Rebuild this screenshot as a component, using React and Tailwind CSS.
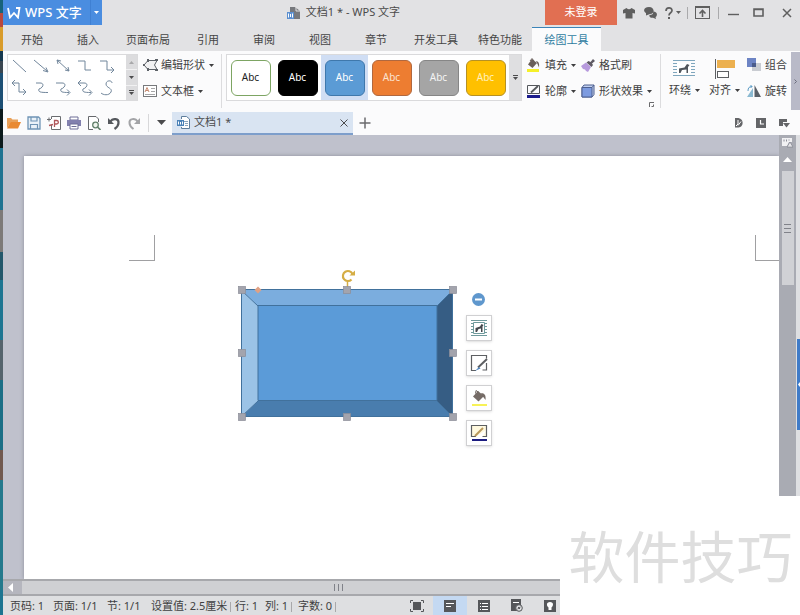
import React from "react";

const desktopBands = [
  ["h-[13px]", "bg-[#176379]"],
  ["h-[14px]", "bg-[#b8483f]"],
  ["h-[24px]", "bg-[#d99c2b]"],
  ["h-[10px]", "bg-[#14384f]"],
  ["h-[12px]", "bg-[#3a4650]"],
  ["h-[36px]", "bg-[#1c4f74]"],
  ["h-[39px]", "bg-[#0c1a1c]"],
  ["h-[62px]", "bg-[#1f7391]"],
  ["h-[42px]", "bg-[#7d7a78]"],
  ["h-[28px]", "bg-[#23586b]"],
  ["h-[60px]", "bg-[#1d7591]"],
  ["h-[40px]", "bg-[#55646c]"],
  ["h-[70px]", "bg-[#1b6f86]"],
  ["h-[30px]", "bg-[#71594f]"],
  ["h-[110px]", "bg-[#24798c]"],
];

function Caret({ className = "" }) {
  return (
    <svg width="5" height="3" viewBox="0 0 5 3" className={"shrink-0 " + className}>
      <path d="M0 0h5L2.500 3z" fill="currentColor" />
    </svg>
  );
}

function Divider({ className = "" }) {
  return <div className={"w-px shrink-0 " + className} />;
}

/* ---------- title bar ---------- */

function TitleBar() {
  return (
    <header className="flex h-[25px] shrink-0 items-center bg-[#e2e2e4]">
      <button className="flex h-full w-[99px] shrink-0 items-center bg-[#4a8de0] text-white">
        <svg width="14" height="12" viewBox="0 0 14 12" className="ml-1 mr-1">
          <path d="M1 1l2 9.500L7 6l4 4.500L12.500 1H9" fill="none" stroke="#fff" strokeWidth="1.800" />
        </svg>
        <span className="whitespace-nowrap text-[13px] font-medium">WPS 文字</span>
        <span className="ml-auto flex h-full w-[12px] items-center justify-center border-l border-[#3f80d3]">
          <Caret />
        </span>
      </button>
      <div className="flex flex-1 items-center justify-center gap-[5px] pl-10 text-[#4a4a4a]">
        <svg width="14" height="14" viewBox="0 0 14 14">
          <path d="M3 1h5v3h1v9H7V6H3z" fill="#77797d" />
          <path d="M8 1l5 4v8H8z" fill="#77797d" />
          <path d="M9 1v4h4" fill="none" stroke="#e2e2e4" />
          <rect x="0" y="6" width="7" height="7" fill="#5b8fd0" />
          <path d="M1.500 7.500v4M5.500 7.500v4M3.500 8v3" stroke="#fff" strokeWidth="1" />
        </svg>
        <h1 className="whitespace-nowrap text-[11px]">文档1 * - WPS 文字</h1>
      </div>
      <button className="h-full w-[72px] shrink-0 bg-[#e16f52] text-[11px] text-white">未登录</button>
      <div className="flex h-full w-[183px] shrink-0 items-center text-[#5f5f5f]">
        <button aria-label="皮肤" className="ml-[6px]">
          <svg width="12" height="12" viewBox="0 0 12 12">
            <path d="M3.500 1Q6 3.500 8.500 1L12 3v3.500L9.500 6v5.500h-7V6L0 6.500V3z" fill="currentColor" />
          </svg>
        </button>
        <button aria-label="反馈" className="ml-[9px]">
          <svg width="13" height="12" viewBox="0 0 13 12">
            <path d="M5 0c6 0 6 7 1 7L2 8.500 2 6C-1.500 4 0 0 5 0z" fill="currentColor" />
            <path d="M9 4.500c5 0 4.500 4.500 2.500 5.500l.5 2-3-1.200C6 11 5 9.500 5.500 8 9 8 9.500 6 9 4.500z" fill="currentColor" />
          </svg>
        </button>
        <button aria-label="帮助" className="ml-2 flex items-center gap-[3px]">
          <svg width="8" height="12" viewBox="0 0 8 12">
            <path d="M1 4C1 0 7 0 7 3.500 7 6 4 5.500 4 8.500" fill="none" stroke="currentColor" strokeWidth="1.700" />
            <rect x="3" y="10" width="2" height="2" fill="currentColor" />
          </svg>
          <Caret />
        </button>
        <Divider className="ml-[6px] h-3 bg-[#aaaaac]" />
        <button aria-label="功能区" className="ml-[7px]">
          <svg width="15" height="13" viewBox="0 0 15 13">
            <rect x=".5" y=".5" width="14" height="12" fill="none" stroke="currentColor" />
            <path d="M0 1.500h15" stroke="currentColor" />
            <path d="M7.500 11V5M4.500 7.500l3-3 3 3" fill="none" stroke="currentColor" strokeWidth="1.600" />
          </svg>
        </button>
        <Divider className="ml-2 h-3 bg-[#aaaaac]" />
        <button aria-label="最小化" className="ml-[9px]">
          <svg width="11" height="12" viewBox="0 0 11 12">
            <path d="M0 7.500h11" stroke="currentColor" strokeWidth="1.400" />
          </svg>
        </button>
        <button aria-label="最大化" className="ml-[14px]">
          <svg width="11" height="9" viewBox="0 0 11 9">
            <path d="M1 1h9v7H1zM1 1.500h9" fill="none" stroke="currentColor" strokeWidth="1.600" />
          </svg>
        </button>
        <button aria-label="关闭" className="ml-[18px]">
          <svg width="10" height="10" viewBox="0 0 10 10">
            <path d="M1 1l8 8M9 1L1 9" stroke="currentColor" strokeWidth="1.500" />
          </svg>
        </button>
      </div>
    </header>
  );
}

/* ---------- ribbon tabs ---------- */

function RibbonTabs() {
  const tabs = ["开始", "插入", "页面布局", "引用", "审阅", "视图", "章节", "开发工具", "特色功能"];
  return (
    <nav className="flex h-[26px] shrink-0 bg-[#e2e2e4] pl-px pt-[2px] text-[11px] text-[#454545]">
      {tabs.map((t) => (
        <button key={t} className={"h-full shrink-0 pt-[2px] " + (t.length > 2 ? "w-16" : "w-14")}>
          {t}
        </button>
      ))}
      <button className="h-full w-[69px] shrink-0 border-t border-[#3b84b8] bg-[#fbfbfc] pt-px text-[#2f7ba0]">绘图工具</button>
    </nav>
  );
}

/* ---------- ribbon ---------- */

const connectorPaths = [
  "M2 2L15 14",
  "M1 2L14 13M15 14l-5-1.500M15 14l-2-4.500",
  "M2 2L14 13M2 2l4 1M2 2l1 4M14 13l-4-1M14 13l-1-4",
  "M1 3h7v9h6",
  "M1 3h7v9h7M12 9l3 3-3 3",
  "M1 3h7v9h7M4 0L1 3l3 3M12 9l3 3-3 3",
  "M3 3h4c5 0 3 5-1 6-1 3 1 3.500 9 3.500",
  "M1 3h6c5 0 3 5-1 6-1 3 1 3.500 8 3.500M12 9.500l3 3-3 3",
  "M1 3h6c5 0 3 5-1 6-1 3 1 3.500 8 3.500M4 0L1 3l3 3M12 9.500l3 3-3 3",
  "M13 3C13 0 7 0 7 4s7 4 5 8-8 3-10 1",
];

function LineGallery() {
  return (
    <div className="ml-1 flex h-[47px] w-[131px] shrink-0 border border-[#dadadc] bg-white">
      <div className="grid flex-1 grid-cols-5 pb-px pr-2">
        {connectorPaths.map((d, i) => (
          <button key={i} aria-label={"连接符 " + (i + 1)} className="flex items-center justify-center">
            <svg width="16" height="16" viewBox="0 0 16 16">
              <path d={d} fill="none" stroke="#71869b" strokeWidth="1" />
            </svg>
          </button>
        ))}
      </div>
      <div className="flex w-[11px] flex-col divide-y divide-[#f1f1f2] bg-[#dcdcde] text-[#4c4c4e]">
        <button aria-label="上移" className="flex flex-1 items-center justify-center text-[#a8a8aa]">
          <Caret className="rotate-180" />
        </button>
        <button aria-label="下移" className="flex flex-1 items-center justify-center">
          <Caret />
        </button>
        <button aria-label="更多线条" className="flex flex-1 flex-col items-center justify-center gap-px">
          <span className="h-px w-[5px] bg-current" />
          <Caret />
        </button>
      </div>
    </div>
  );
}

function RibbonButton({ icon, label, caret }) {
  return (
    <button className="flex h-[26px] items-center whitespace-nowrap">
      <span className="flex w-[18px] shrink-0 items-center">{icon}</span>
      <span>{label}</span>
      {caret && <Caret className="ml-1" />}
    </button>
  );
}

const styles = [
  "border-[#7da563] bg-white text-[#222]",
  "border-black bg-black text-white",
  "border-[#3f78ac] bg-[#5b9bd5] text-white",
  "border-[#b0683f] bg-[#ed7d31] text-[#fbe3d2]",
  "border-[#868686] bg-[#a5a5a5] text-[#f4f4f4]",
  "border-[#b69124] bg-[#ffc000] text-[#fff0bf]",
];

function StyleGallery() {
  return (
    <div className="ml-1 flex h-[47px] w-[296px] shrink-0 border border-[#dadadc] bg-white">
      {styles.map((s, i) => (
        <div key={s} className={"flex w-[47px] shrink-0 items-center justify-center " + (i === 2 ? "bg-[#d0def4]" : "")}>
          <button className={"h-9 w-10 rounded-md border text-[10px] " + s}>Abc</button>
        </div>
      ))}
      <button aria-label="更多样式" className="flex flex-1 flex-col items-center justify-center gap-px bg-[#dfdfe1] text-[#4c4c4e]">
        <span className="h-px w-[5px] bg-current" />
        <Caret />
      </button>
    </div>
  );
}

function BucketIcon() {
  return (
    <svg width="14" height="14" viewBox="0 0 14 14">
      <rect x="0" y="11" width="12" height="3" fill="#f5f02a" />
      <path d="M5 1l5 4-4.500 5L1 6.500z" fill="#6a5f5a" />
      <path d="M3 3l2-2.500L7 3" fill="none" stroke="#6a5f5a" />
      <path d="M9 3c3 .5 3.500 3 3 6.500L10.500 6z" fill="#6a5f5a" />
    </svg>
  );
}

function Ribbon() {
  return (
    <section className="flex h-[59px] shrink-0 bg-[#fbfbfc] text-[11px] text-[#3f3f41]">
      <div className="flex h-full shrink-0 pt-[3px]">
        <LineGallery />
        <div className="-mt-[2px] ml-[5px] w-[78px]">
          <RibbonButton
            label="编辑形状"
            caret
            icon={
              <svg width="15" height="12" viewBox="0 0 15 12">
                <path d="M5 1.500h9L11.500 6l2.500 4.500H5L1 6z" fill="#f1f1f2" stroke="#5d6268" />
                <path d="M4 0h2v3H4zM12 0h3v2h-3zM12 10h3v2h-3zM4 9h2v3H4zM0 5h2v2H0z" fill="#5d6268" />
              </svg>
            }
          />
          <RibbonButton
            label="文本框"
            caret
            icon={
              <svg width="14" height="12" viewBox="0 0 14 12">
                <rect x=".5" y=".5" width="13" height="11" fill="#fff" stroke="#77797c" />
                <path d="M2 7l2-4.500L6 7M3 5.500h2" fill="none" stroke="#c68a70" />
                <path d="M8 3.500h4M8 6.500h4M2 9.500h10" stroke="#a5a5a7" />
              </svg>
            }
          />
        </div>
        <Divider className="h-[54px] bg-[#dcdcde]" />
        <StyleGallery />
        <div className="-mt-[2px] ml-[5px] w-[54px]">
          <RibbonButton label="填充" caret icon={<BucketIcon />} />
          <RibbonButton
            label="轮廓"
            caret
            icon={
              <svg width="14" height="14" viewBox="0 0 14 14">
                <path d="M12.500 4v5.500H.5v-8h12V4" fill="none" stroke="#55585c" />
                <path d="M4 8.500l7-6.500" stroke="#55585c" strokeWidth="1.800" />
                <rect x="0" y="11" width="13" height="3" fill="#1c1c8c" />
              </svg>
            }
          />
        </div>
        <div className="-mt-[2px] w-[72px]">
          <RibbonButton
            label="格式刷"
            icon={
              <svg width="14" height="13" viewBox="0 0 14 13">
                <path d="M0 7l5-3.500L10 8l-3 5-2-1-1-1.500L2 10z" fill="#b79add" />
                <path d="M5.500 3.500l5 4.500 1.500-2-1-1.500L14 2l-2-2-2.500 3L7.500 2z" fill="#5f5a64" />
              </svg>
            }
          />
          <RibbonButton
            label="形状效果"
            caret
            icon={
              <svg width="14" height="14" viewBox="0 0 14 14">
                <path d="M1 3.500l2-2.500h10v9.500L11 13H1z" fill="#c3d1f0" stroke="#4d5f8f" />
                <path d="M1 3.500h10V13H1z" fill="#7d9be0" stroke="#4d5f8f" />
                <path d="M11 3.500L13 1" stroke="#4d5f8f" />
              </svg>
            }
          />
        </div>
        <button aria-label="形状设置" className="-ml-1 mb-[3px] self-end text-[#6a6a6c]">
          <svg width="5" height="5" viewBox="0 0 5 5">
            <path d="M.5 5V.5H5M2.500 4.500h2v-2" fill="none" stroke="currentColor" />
          </svg>
        </button>
        <Divider className="ml-[6px] h-[54px] bg-[#dcdcde]" />
        <button className="ml-2 flex w-[31px] flex-col items-start">
          <svg width="22" height="18" viewBox="0 0 22 18" className="mb-1 ml-1 mt-[6px]">
            <path d="M0 .5h22M0 3.500h22M0 6.500h22M0 9.500h22M0 12.500h22M0 15.500h22" stroke="#7fa6bd" />
            <path d="M4 2.500h14v12H4z" fill="#fff" />
            <path d="M6 13V8.500l5.500-1L14 4l2.500 1L15 7v6h-1.500v-3.500L9 10l-1.500 3z" fill="#50555b" />
          </svg>
          <span className="flex items-center gap-1 whitespace-nowrap leading-4">环绕<Caret /></span>
        </button>
        <button className="ml-[9px] flex w-[31px] flex-col items-start">
          <svg width="20" height="20" viewBox="0 0 20 20" className="mb-[3px] ml-[6px] mt-[5px]">
            <path d="M.5 0v20" stroke="#5d5f62" />
            <rect x="2" y="1" width="18" height="8" fill="#ecb04f" />
            <rect x="2.500" y="12.500" width="11" height="6" fill="#fff" stroke="#5d5f62" />
          </svg>
          <span className="flex items-center gap-1 whitespace-nowrap leading-4">对齐<Caret /></span>
        </button>
        <div className="-mt-[2px] ml-[7px]">
          <RibbonButton
            label="组合"
            icon={
              <svg width="14" height="14" viewBox="0 0 14 14">
                <rect x="5" y="5" width="9" height="8" fill="#c9ccd2" />
                <rect x="0" y="0" width="9" height="9" fill="#6d84c4" />
                <rect x="5" y="5" width="4" height="4" fill="#4b5c8c" />
              </svg>
            }
          />
          <RibbonButton
            label="旋转"
            icon={
              <svg width="14" height="12" viewBox="0 0 14 12">
                <path d="M6 3v9H0z" fill="#8bbad2" />
                <path d="M7.500 0v12H14z" fill="#5a6068" />
                <path d="M1 6C1 3 2 1.500 5 1.500M3.500 0L5 1.500 3.500 3" fill="none" stroke="#5b9bc5" />
              </svg>
            }
          />
        </div>
      </div>
      <button aria-label="更多功能" className="ml-auto mt-px flex w-[9px] shrink-0 items-center justify-center bg-[#b9bac8] text-[#6b6d7c]">
        <svg width="4" height="5" viewBox="0 0 4 5">
          <path d="M.5 .5l2 2-2 2" fill="none" stroke="currentColor" />
        </svg>
      </button>
    </section>
  );
}

/* ---------- quick access and document tabs ---------- */

const quickIcons = [
  [
    "打开",
    <g key="a">
      <path d="M0 12V2h4l1.500 1.500H11V6H4z" fill="#e8a15a" />
      <path d="M3.500 6H14l-3 6.500H0z" fill="#e98a33" />
    </g>,
  ],
  [
    "保存",
    <g key="a">
      <path d="M1 1h10.500L13 2.500V13H1z" fill="#e9f1f8" stroke="#6f94b5" strokeWidth="1.300" />
      <path d="M4 1v4h6V1M3.500 13V8.500h7V13" fill="none" stroke="#6f94b5" strokeWidth="1.200" />
    </g>,
  ],
  [
    "输出为PDF",
    <g key="a">
      <path d="M4.500 3V.5H13.500v13h-9V9" fill="#fff" stroke="#6b6d70" />
      <path d="M0 3.500h4M2 1.500v4" stroke="#6b6d70" />
      <path d="M7.500 11V4.500h2c2.500 0 2.500 3.500 0 3.500h-2M2 9.500l4-1" fill="none" stroke="#b0565a" strokeWidth="1.300" />
    </g>,
  ],
  [
    "打印",
    <g key="a">
      <path d="M3 1h8v3H3z" fill="#fff" stroke="#6d6c96" />
      <path d="M0 4h14v6H0z" fill="#8280ae" />
      <path d="M3 8h8v5H3z" fill="#fff" stroke="#6d6c96" />
      <path d="M4.500 10.500h5" stroke="#6d6c96" />
    </g>,
  ],
  [
    "打印预览",
    <g key="a">
      <path d="M6 13.500H1.500V.5H9L11.500 3v3" fill="#fff" stroke="#66686c" />
      <circle cx="8.500" cy="9" r="2.800" fill="#eef4ec" stroke="#63816b" strokeWidth="1.300" />
      <path d="M10.500 11l3 3" stroke="#63816b" strokeWidth="1.600" />
    </g>,
  ],
  [
    "撤消",
    <g key="a">
      <path d="M3 6C6 1.500 12 2.500 11.500 7c0 2.500-2 4.500-4 6" fill="none" stroke="#55585d" strokeWidth="2.200" />
      <path d="M1 2v6h6z" fill="#55585d" />
    </g>,
  ],
  [
    "恢复",
    <g key="a">
      <path d="M11 6C8 1.500 2 2.500 2.500 7c0 2.500 2 4.500 4 6" fill="none" stroke="#a3a4a7" strokeWidth="2" />
      <path d="M13 2v6H7z" fill="#a3a4a7" />
    </g>,
  ],
];

function QuickBar() {
  return (
    <div className="flex h-[25px] shrink-0 items-center bg-[#fbfbfc] text-[11px] text-[#4b4b4d]">
      <div className="ml-1 flex shrink-0 items-center gap-[6px]">
        {quickIcons.map(([name, art]) => (
          <button key={name} aria-label={name}>
            <svg width="14" height="14" viewBox="0 0 14 14">{art}</svg>
          </button>
        ))}
      </div>
      <Divider className="ml-[7px] h-[18px] bg-[#d8d8da]" />
      <button aria-label="自定义快速访问" className="ml-2 shrink-0">
        <svg width="9" height="5" viewBox="0 0 9 5">
          <path d="M0 0h9L4.500 5z" fill="currentColor" />
        </svg>
      </button>
      <div className="ml-[6px] flex h-[23px] w-[181px] shrink-0 items-center self-end border-b-2 border-[#7d9ecb] bg-[#d9e4f2] pl-[5px] pr-[5px]">
        <svg width="13" height="13" viewBox="0 0 13 13">
          <path d="M4.500 3V.5h5L12.500 3v9.500h-8V11" fill="#fff" stroke="#5f7e9c" />
          <path d="M7 5.500h4M8 7.500h3M8 9.500h3" stroke="#8aa5bd" />
          <rect x="0" y="4" width="7" height="6" fill="#4b82b8" />
          <path d="M1.500 5.500v3M3.500 6v2.500M5.500 5.500v3" stroke="#fff" />
        </svg>
        <span className="ml-1 whitespace-nowrap">文档1 *</span>
        <button aria-label="关闭文档" className="ml-auto">
          <svg width="8" height="8" viewBox="0 0 8 8">
            <path d="M.5 .5l7 7M7.500 .5l-7 7" stroke="currentColor" />
          </svg>
        </button>
      </div>
      <button aria-label="新建文档" className="ml-[6px]">
        <svg width="12" height="12" viewBox="0 0 12 12">
          <path d="M6 .5v11M.5 6h11" stroke="#6b6b6d" strokeWidth="1.500" />
        </svg>
      </button>
      <div className="ml-auto mr-[10px] flex items-center gap-[13px] text-[#646568]">
        <button aria-label="文档助手">
          <svg width="9" height="10" viewBox="0 0 9 10">
            <path d="M1 0h3.500c5.500 1 5.500 9 0 9.500H1z" fill="currentColor" />
            <path d="M2 8l2-2V2M4 7.500l3-4" fill="none" stroke="#fff" />
          </svg>
        </button>
        <button aria-label="历史">
          <svg width="10" height="10" viewBox="0 0 10 10">
            <rect width="10" height="10" fill="currentColor" />
            <path d="M4.500 2v4H8" fill="none" stroke="#fff" strokeWidth="1.200" />
          </svg>
        </button>
        <button aria-label="窗口列表">
          <svg width="11" height="10" viewBox="0 0 11 10">
            <path d="M0 1h8v3H4v4H0z" fill="currentColor" />
            <path d="M4 5h7L7.500 9.500z" fill="currentColor" />
          </svg>
        </button>
      </div>
    </div>
  );
}

/* ---------- document canvas ---------- */

const handles = [
  [7, 28], [112, 28], [218, 28],
  [7, 91], [218, 91],
  [7, 155], [112, 155], [218, 155],
];

function BevelShape() {
  return (
    <svg width="226" height="162" viewBox="0 0 226 162" className="absolute left-[211px] top-[106px]">
      <path d="M6 28h212l-16 16H23z" fill="#7badde" />
      <path d="M6 28l17 16v95L6 155z" fill="#9bc3e6" />
      <path d="M6 155l17-16h179l16 16z" fill="#497dae" />
      <path d="M218 28v127l-16-16V44z" fill="#365d84" />
      <path d="M23 44h179v95H23z" fill="#5b9bd8" />
      <path d="M6.500 27.500h211v127H6.500zM23 43.500h179v95H23zM6 28l17 16M218 28l-16 16M6 155l17-16M218 155l-16-16" fill="none" stroke="#41719c" strokeWidth="1" />
      <path d="M112.500 19v6" stroke="#d5ad45" strokeWidth="1.500" />
      <path d="M116.500 17.500A5 5 0 1 1 117.500 12" fill="none" stroke="#d5ad45" strokeWidth="2.200" />
      <path d="M114.500 13.500h5.500v-5z" fill="#d5ad45" />
      <path d="M23 24.500l3.500 3.500-3.500 3.500-3.500-3.500z" fill="#e0a184" />
      {handles.map(([x, y]) => (
        <rect key={x + "-" + y} x={x - 3.5} y={y - 3.5} width="7" height="7" fill="#a3a4ad" stroke="#8c8e98" strokeWidth=".7" />
      ))}
    </svg>
  );
}

const floatingTools = [
  [
    "环绕方式",
    <g key="a">
      <path d="M1 1.500h16M1 4.500h16M1 7.500h16M1 10.500h16M1 13.500h16M1 16.500h16" stroke="#6f9a9c" />
      <path d="M3.500 3.500h11v11h-11z" fill="#fff" stroke="#6f9a9c" />
      <path d="M5.500 13V9l4.500-1.500L11.500 5l2 1-1 1.500V13H11V9.500L8.500 10 7 13z" fill="#44484d" />
    </g>,
  ],
  [
    "编辑样式",
    <g key="a">
      <path d="M16.500 9V16h-4M6 16.500H1.500v-15h15v3" fill="none" stroke="#5d5f62" strokeWidth="1.200" />
      <path d="M8 13.500L17 5" stroke="#5d5f62" strokeWidth="2" />
      <path d="M5 17l4-4 1.500 1.500z" fill="#4f86c0" />
    </g>,
  ],
  [
    "填充颜色",
    <g key="a">
      <path d="M8 2l6 5-5.500 5.500L3 7.500z" fill="#756b66" />
      <path d="M5.500 4.500L6 1.500l3 2" fill="none" stroke="#756b66" />
      <path d="M11 4c4 0 5 3 4.500 7L12.500 7z" fill="#756b66" />
      <rect x="2" y="15" width="15" height="2" fill="#f7f257" />
    </g>,
  ],
  [
    "轮廓颜色",
    <g key="a">
      <path d="M16.500 6v6.500h-4M6 12.500H1.500v-11h15V6" fill="#fff9df" stroke="#5d5f62" strokeWidth="1.200" />
      <path d="M5 12l8-8" stroke="#b9995b" strokeWidth="2" />
      <rect x="2" y="15" width="15" height="2" fill="#1c1c80" />
    </g>,
  ],
];

function FloatingTools() {
  return (
    <div className="absolute left-[441px] top-[137px] flex w-[27px] flex-col items-center gap-[9px]">
      <button aria-label="收起">
        <svg width="13" height="13" viewBox="0 0 13 13" className="block">
          <circle cx="6.500" cy="6.500" r="6.500" fill="#5f97cd" />
          <rect x="3" y="5.500" width="7" height="2" fill="#fff" />
        </svg>
      </button>
      {floatingTools.map(([name, art]) => (
        <button key={name} aria-label={name} className="flex h-[26px] w-[26px] items-center justify-center border border-[#d0d0d2] bg-white shadow-sm">
          <svg width="18" height="18" viewBox="0 0 18 18">{art}</svg>
        </button>
      ))}
    </div>
  );
}

function Canvas() {
  return (
    <div className="flex min-h-0 flex-1">
      <main className="min-w-0 flex-1 overflow-hidden bg-[#bfc1cc] pl-[21px] pt-[21px]">
        <div className="relative h-full bg-white shadow-[0_0_4px_#8b8d98]">
          <div className="absolute left-[105px] top-[79px] h-[26px] w-[26px] border-b border-r border-[#a0a0a2]" />
          <div className="absolute right-0 top-[79px] h-[26px] w-6 border-b border-l border-[#a0a0a2]" />
          <BevelShape />
          <FloatingTools />
        </div>
      </main>
      <div className="flex w-[17px] shrink-0 flex-col items-center bg-[#a9abb3]">
        <button aria-label="显示标尺" className="mt-[3px]">
          <svg width="11" height="10" viewBox="0 0 11 10" className="block">
            <path d="M0 0h10v4L7 4 5 8H0z" fill="#f1f1f3" />
            <path d="M2 1.500v2M4.500 1.500v2M7 1.500v1" stroke="#8c8e98" />
            <path d="M8 4l3 5H5z" fill="#e5e5e8" stroke="#777984" strokeWidth=".6" />
          </svg>
        </button>
        <button aria-label="向上滚动" className="mt-[9px]">
          <svg width="9" height="5" viewBox="0 0 9 5" className="block">
            <path d="M4.500 0L9 5H0z" fill="#fff" />
          </svg>
        </button>
        <div className="mt-[9px] flex h-[114px] w-3 flex-col items-center justify-center gap-[3px] bg-[#d0d1d5]">
          <span className="h-px w-[7px] bg-[#808289]" />
          <span className="h-px w-[7px] bg-[#808289]" />
          <span className="h-px w-[7px] bg-[#808289]" />
        </div>
      </div>
      <div className="w-1 shrink-0 bg-[#dedfe2] pl-px pt-[204px]">
        <button aria-label="展开侧栏" className="flex h-[91px] w-full items-center justify-end bg-[#3f7bc8]">
          <svg width="2" height="5" viewBox="0 0 2 5">
            <path d="M2 0v5L0 2.500z" fill="#fff" />
          </svg>
        </button>
      </div>
    </div>
  );
}

function HorizontalScroll() {
  return (
    <div className="flex h-[17px] shrink-0 items-center border-b-2 border-t-2 border-[#a7a8ac] bg-[#b5b6be]">
      <button aria-label="向左滚动" className="flex w-[19px] shrink-0 items-center pl-[5px]">
        <svg width="5" height="9" viewBox="0 0 5 9">
          <path d="M5 0v9L0 4.500z" fill="#fff" />
        </svg>
      </button>
      <div className="flex h-full flex-1 items-center bg-[#cfd0d3]">
        <div className="flex w-[632px] justify-center gap-[3px]">
          <span className="h-[7px] w-px bg-[#808289]" />
          <span className="h-[7px] w-px bg-[#808289]" />
          <span className="h-[7px] w-px bg-[#808289]" />
        </div>
      </div>
    </div>
  );
}

/* ---------- status bar ---------- */

function StatusBar() {
  return (
    <footer className="flex h-[19px] shrink-0 items-center whitespace-nowrap bg-[#dedfe1] text-[11px] text-[#3f3f41]">
      <div className="flex shrink-0 items-center pt-[2px]">
        <span className="ml-[7px] w-[43px] shrink-0">页码: 1</span>
        <span className="w-[54px] shrink-0">页面: 1/1</span>
        <span className="w-[44px] shrink-0">节: 1/1</span>
        <span className="w-[79px] shrink-0">设置值: 2.5厘米</span>
        <Divider className="h-[10px] bg-[#a8a8aa]" />
        <span className="ml-[4px] w-[30px] shrink-0">行: 1</span>
        <span className="w-[26px] shrink-0">列: 1</span>
        <Divider className="h-[10px] bg-[#a8a8aa]" />
        <span className="ml-[6px] w-[37px] shrink-0">字数: 0</span>
        <Divider className="h-[10px] bg-[#a8a8aa]" />
      </div>
      <div className="ml-16 flex h-full shrink-0 items-center text-[#55575a]">
        <button aria-label="全屏显示" className="flex h-full w-[33px] items-center justify-center">
          <svg width="14" height="12" viewBox="0 0 14 12">
            <rect x="3" y="2" width="8" height="8" fill="currentColor" />
            <path d="M3 .5H.5V3M11 .5h2.500V3M3 11.500H.5V9M11 11.500h2.500V9" fill="none" stroke="currentColor" />
          </svg>
        </button>
        <button aria-label="页面视图" className="flex h-full w-[34px] items-center justify-center bg-[#c4d9f2]">
          <svg width="12" height="12" viewBox="0 0 12 12">
            <rect width="12" height="12" fill="currentColor" />
            <path d="M2 3.500h8M2 6.500h5" stroke="#fff" />
          </svg>
        </button>
        <button aria-label="大纲视图" className="flex h-full w-[33px] items-center justify-center">
          <svg width="12" height="12" viewBox="0 0 12 12">
            <rect width="12" height="12" fill="currentColor" />
            <path d="M2 3.500h1M4 3.500h6M2 6.500h1M4 6.500h6M2 9.500h1M4 9.500h6" stroke="#fff" />
          </svg>
        </button>
        <button aria-label="Web版式" className="flex h-full w-[33px] items-center justify-center">
          <svg width="12" height="13" viewBox="0 0 12 13">
            <path d="M0 0h10v12H0z" fill="currentColor" />
            <path d="M2 3.500h6" stroke="#fff" />
            <circle cx="8" cy="9" r="3.300" fill="#dedfe1" stroke="currentColor" />
            <path d="M6.500 10l3-2M7 8l2 2" stroke="currentColor" />
          </svg>
        </button>
        <button aria-label="护眼模式" className="flex h-full w-[33px] items-center justify-center">
          <svg width="12" height="12" viewBox="0 0 12 12">
            <rect width="12" height="12" fill="currentColor" />
            <path d="M6 2c4 0 3.500 4 1.500 5.500V10h-3V7.500C2.500 6 2 2 6 2z" fill="#fff" />
          </svg>
        </button>
      </div>
    </footer>
  );
}

export default function App() {
  return (
    <div className="relative flex h-screen w-full overflow-hidden bg-[#1d7591] font-['Noto_Sans','Noto_Sans_CJK_SC',sans-serif]">
      <div className="w-[3px] shrink-0">
        {desktopBands.map(([h, c], i) => (
          <div key={i} className={h + " " + c} />
        ))}
      </div>
      <div className="flex min-w-0 flex-1 flex-col">
        <TitleBar />
        <RibbonTabs />
        <Ribbon />
        <QuickBar />
        <Canvas />
        <HorizontalScroll />
        <StatusBar />
      </div>
      <div className="absolute bottom-0 right-0 flex h-[119px] w-[240px] items-center justify-center bg-white pl-px">
        <span className="whitespace-nowrap text-[56px] font-normal leading-none text-[#dedede]">软件技巧</span>
      </div>
    </div>
  );
}
